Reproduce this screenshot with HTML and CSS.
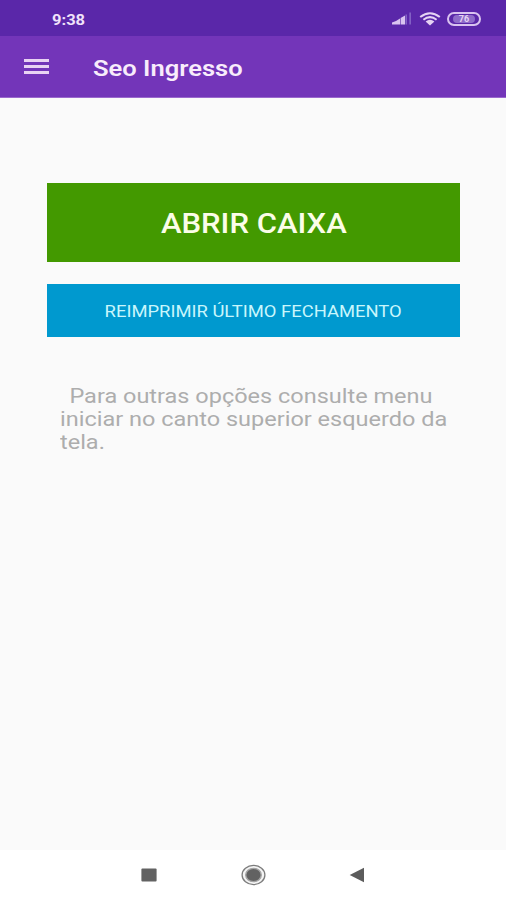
FILE: index.html
```html
<!DOCTYPE html>
<html lang="pt-BR">
  <head>
    <meta charset="UTF-8" />
    <meta name="viewport" content="width=device-width, initial-scale=1.0" />
    <title>Seo Ingresso</title>
    <link rel="stylesheet" href="styles.css">
  </head>
  <body>
    <div class="status">
      <span class="status__time">9:38</span>
      <div class="status__icons">
        <svg class="signal" width="20" height="13" viewBox="0 0 20 13">
          <path d="M0 12.5V10.5L4 9V12.5ZM4 12.5V9L8 6.5V12.5ZM8.6 12.5V6L13 3.5V12.5Z" fill="#d9c3f0" />
          <path d="M13.4 2.5H15V12.5H13.4ZM17.3 .5H19V12.5H17.3Z" fill="#8260c4" />
        </svg>
        <svg class="wifi" width="22" height="14" viewBox="0 0 22 14">
          <g fill="none" stroke="#e6d3f4" stroke-width="2">
            <path d="M1.2 5Q11 -2.6 20.8 5" />
            <path d="M4.4 7.7Q11 2.6 17.6 7.7" />
          </g>
          <path d="M6.6 9.4Q11 6 15.4 9.4L11 13.5Z" fill="#e6d3f4" />
        </svg>
        <span class="battery"><span class="battery__level">76</span></span>
      </div>
    </div>

    <header class="toolbar">
      <button class="menu" aria-label="Menu">
        <span class="menu__line"></span>
        <span class="menu__line"></span>
        <span class="menu__line"></span>
      </button>
      <h1 class="toolbar__title">Seo Ingresso</h1>
    </header>

    <main class="content">
      <button class="btn btn--open"><span class="btn__label">ABRIR CAIXA</span></button>
      <button class="btn btn--reprint"><span class="btn__label">REIMPRIMIR ÚLTIMO FECHAMENTO</span></button>
      <p class="hint">
        <span class="hint__first">Para outras opções consulte menu</span><br />
        iniciar no canto superior esquerdo da<br />
        tela.
      </p>
    </main>

    <nav class="navbar">
      <svg width="16" height="14" viewBox="0 0 16 14">
        <rect x=".4" y=".4" width="15.2" height="13.2" rx="1" fill="#626262" />
      </svg>
      <svg width="26" height="22" viewBox="0 0 26 22">
        <ellipse cx="13.5" cy="11" rx="11.4" ry="9.6" fill="#f4f4f4" stroke="#7c7c7c" stroke-width="1.3" />
        <ellipse cx="13.5" cy="11" rx="7.8" ry="6.6" fill="#626262" stroke="#a5a5a5" stroke-width="1.4" />
      </svg>
      <svg width="16" height="16" viewBox="0 0 16 16">
        <path d="M.7 8L15 .8V15.2Z" fill="#5c5c5c" />
      </svg>
    </nav>
  </body>
</html>
```

FILE: styles.css
```css
* {
  margin: 0;
  padding: 0;
  box-sizing: border-box;
}

body {
  height: 900px;
  display: flex;
  flex-direction: column;
  font-family: Roboto, sans-serif;
  background-color: #fafafa;
  overflow: hidden;
}

button {
  border: none;
  font-family: inherit;
  cursor: pointer;
}

/* STATUS BAR */
.status {
  height: 36px;
  display: flex;
  justify-content: space-between;
  padding: 0 25px 0 52px;
  background-color: #5a27a9;
}

.status__time {
  line-height: 40px;
  font-size: 14px;
  font-weight: 700;
  color: #f0e2fa;
  transform: scaleX(1.18);
  transform-origin: left;
}

.status__icons {
  display: flex;
  padding-top: 12px;
}

.wifi {
  margin-left: 7px;
}

.battery {
  width: 34px;
  height: 14px;
  margin-left: 6px;
  padding: 1px;
  border: 2px solid #d9c3f0;
  border-radius: 7px;
}

.battery__level {
  display: block;
  width: 22px;
  margin-left: 3px;
  border-radius: 4px;
  line-height: 8px;
  font-size: 9px;
  font-weight: 700;
  text-align: center;
  color: #e6d3f4;
  background-color: #8e6bc9;
}

/* TOOLBAR */
.toolbar {
  height: 62px;
  display: flex;
  align-items: center;
  padding-left: 24px;
  background-color: #7335b9;
  border-bottom: 1px solid #9a68cd;
}

.menu {
  width: 25px;
  display: flex;
  flex-direction: column;
  gap: 3px;
  background: none;
}

.menu__line {
  height: 3px;
  background-color: #e9d3f3;
}

.toolbar__title {
  margin-left: 44px;
  padding-top: 4px;
  font-size: 22px;
  font-weight: 600;
  color: #f8ecfb;
  transform: scaleX(1.16);
  transform-origin: left;
}

/* CONTENT */
.content {
  flex: 1;
  display: flex;
  flex-direction: column;
  padding: 85px 46px 0 47px;
}

.btn__label {
  display: inline-block;
  padding-top: 2px;
  transform: scaleX(1.15);
}

.btn--open {
  height: 79px;
  font-size: 27px;
  font-weight: 500;
  color: #fbfde8;
  background-color: #439900;
}

.btn--reprint {
  height: 53px;
  margin-top: 22px;
  font-size: 16px;
  color: #c9f6fc;
  background-color: #0099cf;
}

.hint {
  margin-top: 48px;
  padding-left: 13px;
  line-height: 23px;
  font-size: 20px;
  white-space: nowrap;
  color: #adadad;
  transform: scaleX(1.175);
  transform-origin: 13px 0;
}

.hint__first {
  margin-left: 8px;
}

/* NAVIGATION BAR */
.navbar {
  height: 50px;
  display: flex;
  align-items: center;
  justify-content: space-between;
  padding: 0 141px 1px;
  background-color: #fff;
}
```
